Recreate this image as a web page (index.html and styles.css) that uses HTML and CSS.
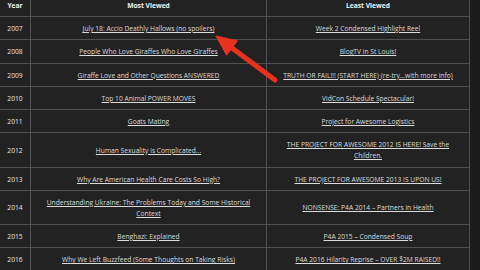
FILE: index.html
```html
<!DOCTYPE html>
<html>
<head>
<meta charset="utf-8">
<link rel="stylesheet" href="styles.css">
</head>
<body>
<div class="wrap">
<table class="tbl">
<colgroup><col class="c-yr"><col class="c-mv"><col class="c-lv"></colgroup>
<thead>
<tr><th>Year</th><th>Most Viewed</th><th>Least Viewed</th></tr>
</thead>
<tbody>
<tr><td>2007</td><td><a href="#">July 18: Accio Deathly Hallows (no spoilers)</a></td><td><a href="#">Week 2 Condensed Highlight Reel</a></td></tr>
<tr><td>2008</td><td><a href="#">People Who Love Giraffes Who Love Giraffes</a></td><td><a href="#">BlogTV in St Louis!</a></td></tr>
<tr><td>2009</td><td><a href="#">Giraffe Love and Other Questions ANSWERED</a></td><td><a href="#">TRUTH OR FAIL!!! (START HERE) (re-try...with more info)</a></td></tr>
<tr><td>2010</td><td><a href="#">Top 10 Animal POWER MOVES</a></td><td><a href="#">VidCon Schedule Spectacular!</a></td></tr>
<tr><td>2011</td><td><a href="#">Goats Mating</a></td><td><a href="#">Project for Awesome Logistics</a></td></tr>
<tr><td>2012</td><td><a href="#">Human Sexuality is Complicated...</a></td><td><a href="#">THE PROJECT FOR AWESOME 2012 IS HERE! Save the Children.</a></td></tr>
<tr><td>2013</td><td><a href="#">Why Are American Health Care Costs So High?</a></td><td><a href="#">THE PROJECT FOR AWESOME 2013 IS UPON US!</a></td></tr>
<tr><td>2014</td><td><a href="#">Understanding Ukraine: The Problems Today and Some Historical Context</a></td><td><a href="#">NONSENSE: P4A 2014 – Partners in Health</a></td></tr>
<tr><td>2015</td><td><a href="#">Benghazi: Explained</a></td><td><a href="#">P4A 2015 – Condensed Soup</a></td></tr>
<tr><td>2016</td><td><a href="#">Why We Left Buzzfeed (Some Thoughts on Taking Risks)</a></td><td><a href="#">P4A 2016 Hilarity Reprise – OVER $2M RAISED!!</a></td></tr>
</tbody>
</table>
<svg class="arrow" width="90" height="65" viewBox="0 0 90 65">
<line x1="28" y1="20" x2="75" y2="55" stroke="#e8321f" stroke-width="5" stroke-linecap="round"/>
<polygon points="16,11 37.4,15.8 26.6,30.2" fill="#e8321f" stroke="#e8321f" stroke-width="1" stroke-linejoin="round"/>
</svg>
</div>
</body>
</html>
```
FILE: styles.css
```css
html, body {
  margin: 0;
  padding: 0;
  background: #1c1c1c;
  width: 480px;
  height: 270px;
  overflow: hidden;
}
.wrap {
  position: relative;
  width: 480px;
}
.tbl {
  border-collapse: collapse;
  width: 470px;
  background: #222222;
  font-family: "Open Sans", "Noto Sans", sans-serif;
  font-size: 6.7px;
  color: #e6e6e6;
  table-layout: fixed;
  margin-left: -1px;
}
.c-yr { width: 31px; }
.c-mv { width: 236px; }
.c-lv { width: 203px; }
.tbl th, .tbl td {
  border: 1px solid #505050;
  text-align: center;
  line-height: 11px;
  padding: 6px 9px 5.25px;
}
.tbl th {
  font-weight: bold;
  color: #f2f2f2;
  padding: 0 4px 5px;
  border-top: none;
}
.tbl th:first-child, .tbl td:first-child { padding-left: 0; padding-right: 0; }
.tbl a {
  color: #dcdcdc;
  text-decoration: underline;
  text-underline-offset: 1px;
}
.arrow {
  position: absolute;
  left: 200px;
  top: 25px;
}
```
